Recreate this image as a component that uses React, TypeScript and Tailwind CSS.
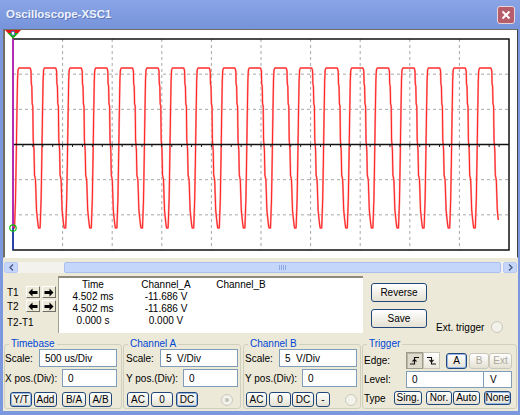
import clsx from 'clsx'
import type { ReactNode } from 'react'

const font = { fontFamily: '"Liberation Sans", Arial, sans-serif' }

// plot geometry, in window pixels
const PX0 = 13
const PX1 = 509
const PY0 = 39
const PY1 = 250
const DIV_X = (PX1 - PX0) / 10
const DIV_Y = (PY1 - PY0) / 6

const wavePoints = (() => {
  const pts: string[] = []
  const period = 25.6
  for (let k = 0; k < 20; k++) {
    const t = PX0 + period * k
    const seg: [number, number][] = [
      [t, 228],
      [t + 1.5, 228],
      [t + 2.5, 200],
      [t + 3.2, 160],
      [t + 3.8, 120],
      [t + 4.5, 80],
      [t + 5, 70],
      [t + 5.8, 68],
      [t + 17.2, 68],
      [t + 18, 71],
      [t + 18.3, 84],
      [t + 18.8, 86],
      [t + 19.2, 104],
      [t + 19.8, 106],
      [t + 20.2, 140],
      [t + 21, 150],
      [t + 21.5, 175],
      [t + 22.5, 180],
      [t + 23.5, 210],
      [t + 24.5, 220],
      [t + 25.2, 226],
    ]
    for (const [x, y] of seg) if (x <= 498.5) pts.push(`${x.toFixed(1)},${y}`)
  }
  return pts.join(' ')
})()

function Screen() {
  const vLines = Array.from({ length: 9 }, (_, i) => PX0 + DIV_X * (i + 1))
  const hLines = [1, 2, 4, 5].map((j) => PY0 + DIV_Y * j)
  const ticks = Array.from({ length: 49 }, (_, i) => PX0 + (DIV_X / 5) * (i + 1))
  const midY = PY0 + DIV_Y * 3
  return (
    <svg width="512" height="227" viewBox="5 30 512 227" className="block">
      <rect x="5" y="30" width="512" height="227" fill="#fff" />
      {vLines.map((x) => (
        <line key={x} x1={x} y1={PY0} x2={x} y2={PY1} stroke="#a8a8a8" strokeDasharray="3 3" />
      ))}
      {hLines.map((y) => (
        <line key={y} x1={PX0} y1={y} x2={PX1} y2={y} stroke="#a8a8a8" strokeDasharray="3 3" />
      ))}
      <polyline points={wavePoints} fill="none" stroke="#ffa0a0" strokeWidth="1.9" strokeLinejoin="round" />
      <polyline points={wavePoints} fill="none" stroke="#ff1414" strokeWidth="0.9" strokeLinejoin="round" />
      <line x1={PX0} y1={midY} x2={PX1} y2={midY} stroke="#111" strokeWidth="1.5" />
      {ticks.map((x) => (
        <line key={x} x1={x} y1={midY} x2={x} y2={midY + 2.5} stroke="#222" />
      ))}
      <rect x={PX0} y={PY0} width={PX1 - PX0} height={PY1 - PY0} fill="none" stroke="#111" strokeWidth="1.5" />
      {/* cursors */}
      <line x1={PX0} y1={PY0} x2={PX0} y2={228} stroke="#e020e0" strokeWidth="1.4" />
      <line x1={PX0} y1={228} x2={PX0} y2={PY1} stroke="#2040d0" strokeWidth="1.4" />
      <circle cx={PX0} cy="228" r="3.2" fill="none" stroke="#10c010" strokeWidth="1.2" />
      <polygon points="5,30 21,30 13,38.5" fill="#e01818" />
      <polygon points="7.5,33 18.5,33 13,38.5" fill="#18b818" />
      <rect x="11.5" y="31.5" width="3" height="3.5" fill="#fff" stroke="#2a4fd0" strokeWidth="0.6" />
    </svg>
  )
}

function XpButton({
  children,
  className,
  focus,
  disabled,
}: {
  children: ReactNode
  className?: string
  focus?: boolean
  disabled?: boolean
}) {
  return (
    <button
      className={clsx(
        'flex shrink-0 items-center justify-center rounded-[3px] border bg-linear-to-b from-white to-[#e4e1d3] text-[10px] leading-none',
        disabled ? 'border-[#c9c7ba] text-[#aca899]' : 'border-[#21477a] text-black',
        focus && 'shadow-[inset_0_0_0_1px_#97b8e6]',
        className,
      )}
    >
      {children}
    </button>
  )
}

function Field({ value, className }: { value: string; className: string }) {
  return (
    <div
      className={clsx(
        'flex h-full shrink-0 items-center border border-[#7f9db9] bg-white pl-[5px] text-[10px] whitespace-pre',
        className,
      )}
    >
      {value}
    </div>
  )
}

function Radio({ dot }: { dot?: boolean }) {
  return (
    <div className="flex h-[12px] w-[12px] shrink-0 items-center justify-center rounded-full border border-[#cac8bb] bg-[#f2f1ea]">
      {dot && <div className="h-[4px] w-[4px] rounded-full bg-[#c4c2b6]" />}
    </div>
  )
}

function Arrow({ dir }: { dir: 'left' | 'right' }) {
  return (
    <div className="flex h-[12px] w-[14px] items-center justify-center border border-t-white border-l-white border-r-[#716f64] border-b-[#716f64] bg-[#ece9d8]">
      <svg width="10" height="9" viewBox="0 0 10 9">
        <path
          d={dir === 'left' ? 'M0.5 4.5 L4.5 0.5 V3 H9.5 V6 H4.5 V8.5 Z' : 'M9.5 4.5 L5.5 0.5 V3 H0.5 V6 H5.5 V8.5 Z'}
          fill="#000"
        />
      </svg>
    </div>
  )
}

function ScrollArrow({ dir }: { dir: 'left' | 'right' }) {
  return (
    <div className="flex h-full w-[14px] shrink-0 items-center justify-center rounded-[2px] border border-[#b7c9f4] bg-[#c6d6f9]">
      <svg width="5" height="7" viewBox="0 0 5 7">
        <path d={dir === 'left' ? 'M4 0.5 L1 3.5 L4 6.5' : 'M1 0.5 L4 3.5 L1 6.5'} fill="none" stroke="#4a5f8f" strokeWidth="1.5" />
      </svg>
    </div>
  )
}

function Group({ title, className, children }: { title: string; className: string; children: ReactNode }) {
  return (
    <fieldset className={clsx('h-[71px] shrink-0 rounded-[3px] border border-[#d0d0bf]', className)}>
      <legend className="ml-[4px] px-[2px] text-[10px] leading-[12px] text-[#0046d5]">{title}</legend>
      <div className="-mt-[1px]">{children}</div>
    </fieldset>
  )
}

function EdgeIcon({ falling }: { falling?: boolean }) {
  return (
    <svg width="11" height="11" viewBox="0 0 11 11">
      <path d={falling ? 'M1 2.5 H5.5 V9 H10' : 'M1 9 H5.5 V2.5 H10'} fill="none" stroke="#111" strokeWidth="1.1" />
      <path d={falling ? 'M3.5 5 L5.5 7 L7.5 5' : 'M3.5 6.5 L5.5 4.5 L7.5 6.5'} fill="none" stroke="#111" strokeWidth="1.1" />
    </svg>
  )
}

export default function App() {
  return (
    <div className="flex h-[415px] w-[520px] flex-col bg-[#7b98de] text-black" style={font}>
      {/* title bar */}
      <div className="flex h-[29px] items-center justify-between bg-linear-to-b from-[#8aa5e6] to-[#7693db] pr-[5px] pl-[6px]">
        <div className="text-[11.5px] font-bold text-[#eef2fd] [text-shadow:1px_1px_0_#5d77b8]">Oscilloscope-XSC1</div>
        <div className="flex h-[18px] w-[18px] items-center justify-center rounded-[3px] border border-[#e9d4d8] bg-[#b65d6b]">
          <svg width="10" height="10" viewBox="0 0 10 10">
            <path d="M1.5 1.5 L8.5 8.5 M8.5 1.5 L1.5 8.5" stroke="#fff" strokeWidth="2" />
          </svg>
        </div>
      </div>

      <div className="mr-[2px] ml-[3px] flex h-[382px] flex-col bg-[#ece9d8]">
        {/* screen */}
        <div className="h-[229px] border-t border-r border-b border-l-2 border-t-[#716f64] border-r-[#404040] border-b-white border-l-[#716f64]">
          <Screen />
        </div>

        {/* scrollbar */}
        <div className="mt-[4px] mr-[1px] ml-[1px] flex h-[11px] bg-[#f3f2ec]">
          <ScrollArrow dir="left" />
          <div className="w-[46px]" />
          <div className="flex flex-1 items-center justify-center rounded-[2px] border border-[#a9bfee] bg-[#c5d6fb]">
            <div className="flex gap-[1px]">
              <div className="h-[5px] w-[1px] bg-[#8ea8e0]" />
              <div className="h-[5px] w-[1px] bg-[#8ea8e0]" />
              <div className="h-[5px] w-[1px] bg-[#8ea8e0]" />
              <div className="h-[5px] w-[1px] bg-[#8ea8e0]" />
            </div>
          </div>
          <div className="w-[2px]" />
          <ScrollArrow dir="right" />
        </div>

        {/* readout row */}
        <div className="mt-[3px] flex h-[57px] text-[10px]">
          <div className="w-[55px] shrink-0 pt-[10px] pl-[4px]">
            <div className="flex h-[12px] items-center">
              <div className="w-[19px]">T1</div>
              <Arrow dir="left" />
              <div className="w-[2px]" />
              <Arrow dir="right" />
            </div>
            <div className="mt-[2px] flex h-[12px] items-center">
              <div className="w-[19px]">T2</div>
              <Arrow dir="left" />
              <div className="w-[2px]" />
              <Arrow dir="right" />
            </div>
            <div className="mt-[5px] leading-[12px]">T2-T1</div>
          </div>

          <div className="grid h-[57px] w-[305px] shrink-0 grid-cols-[68px_78px_72px] content-start border-t-2 border-l border-t-[#8d8a7c] border-l-[#a19e90] bg-white pt-[1px] leading-[12px]">
            <div className="text-center">Time</div>
            <div className="text-center">Channel_A</div>
            <div className="text-center">Channel_B</div>
            <div className="text-center">4.502 ms</div>
            <div className="text-center">-11.686 V</div>
            <div />
            <div className="text-center">4.502 ms</div>
            <div className="text-center">-11.686 V</div>
            <div />
            <div className="text-center">0.000 s</div>
            <div className="text-center">0.000 V</div>
            <div />
          </div>

          <div className="flex flex-1">
            <div className="ml-[8px] flex flex-col gap-[7px] pt-[7px]">
              <XpButton className="h-[19px] w-[56px] text-[10.5px]">Reverse</XpButton>
              <XpButton className="h-[19px] w-[56px] text-[10.5px]">Save</XpButton>
            </div>
            <div className="mt-[45px] ml-[9px] flex h-[12px] items-center">
              <span>Ext. trigger</span>
              <div className="w-[7px]" />
              <Radio />
            </div>
          </div>
        </div>

        {/* control groups */}
        <div className="mt-[5px] ml-[1px] flex text-[10px]">
          <Group title="Timebase" className="w-[118px]">
            <div className="flex h-[18px] items-center">
              <div className="w-[34px] shrink-0">Scale:</div>
              <Field value="500 us/Div" className="w-[78px]" />
            </div>
            <div className="mt-[2px] flex h-[18px] items-center">
              <div className="w-[57px] shrink-0">X pos.(Div):</div>
              <Field value="0" className="w-[55px]" />
            </div>
            <div className="mt-[5px] flex h-[15px] pl-[5px]">
              <XpButton focus className="w-[22px]">Y/T</XpButton>
              <XpButton className="ml-[2px] w-[23px]">Add</XpButton>
              <XpButton className="ml-[5px] w-[24px]">B/A</XpButton>
              <XpButton className="ml-[3px] w-[23px]">A/B</XpButton>
            </div>
          </Group>

          <Group title="Channel A" className="ml-[1px] w-[118px]">
            <div className="flex h-[18px] items-center">
              <div className="w-[36px] shrink-0 pl-[2px]">Scale:</div>
              <Field value="5  V/Div" className="w-[78px]" />
            </div>
            <div className="mt-[2px] flex h-[18px] items-center">
              <div className="w-[59px] shrink-0 pl-[2px]">Y pos.(Div):</div>
              <Field value="0" className="w-[55px]" />
            </div>
            <div className="mt-[5px] flex h-[15px] items-center pl-[3px]">
              <XpButton className="h-full w-[22px]">AC</XpButton>
              <XpButton className="ml-[2px] h-full w-[22px]">0</XpButton>
              <XpButton focus className="ml-[3px] h-full w-[22px]">DC</XpButton>
              <div className="ml-[23px]">
                <Radio dot />
              </div>
            </div>
          </Group>

          <Group title="Channel B" className="ml-[2px] w-[118px]">
            <div className="flex h-[18px] items-center">
              <div className="w-[35px] shrink-0 pl-[1px]">Scale:</div>
              <Field value="5  V/Div" className="w-[78px]" />
            </div>
            <div className="mt-[2px] flex h-[18px] items-center">
              <div className="w-[58px] shrink-0 pl-[1px]">Y pos.(Div):</div>
              <Field value="0" className="w-[55px]" />
            </div>
            <div className="mt-[5px] flex h-[15px] items-center pl-[2px]">
              <XpButton className="h-full w-[21px]">AC</XpButton>
              <XpButton className="ml-[2px] h-full w-[22px]">0</XpButton>
              <XpButton className="ml-[1px] h-full w-[22px]">DC</XpButton>
              <XpButton className="ml-[2px] h-full w-[14px]">-</XpButton>
              <div className="ml-[15px]">
                <Radio />
              </div>
            </div>
          </Group>

          <Group title="Trigger" className="ml-[1px] w-[155px]">
            <div className="mt-[3px] flex h-[17px] items-center">
              <div className="w-[43px] shrink-0 pl-[1px]">Edge:</div>
              <div className="flex h-full w-[17px] items-center justify-center border border-[#9d9a8c] bg-[#dedbcd] shadow-[inset_1px_1px_0_#b9b6a8]">
                <EdgeIcon />
              </div>
              <div className="flex h-full w-[17px] items-center justify-center border border-[#c9c6b8] bg-linear-to-b from-white to-[#ebe8dc]">
                <EdgeIcon falling />
              </div>
              <XpButton focus className="ml-[6px] h-[16px] w-[21px]">A</XpButton>
              <XpButton disabled className="ml-[2px] h-[16px] w-[20px]">B</XpButton>
              <XpButton disabled className="h-[16px] w-[23px]">Ext</XpButton>
            </div>
            <div className="mt-[2px] flex h-[17px] items-center">
              <div className="w-[43px] shrink-0 pl-[1px]">Level:</div>
              <Field value="0" className="w-[78px]" />
              <Field value="V" className="w-[28px] border-l-0 pl-[6px]" />
            </div>
            <div className="mt-[3px] flex h-[14px] items-center">
              <div className="w-[31px] shrink-0 pl-[1px]">Type</div>
              <XpButton className="h-full w-[28px]">Sing.</XpButton>
              <XpButton className="ml-[4px] h-full w-[26px]">Nor.</XpButton>
              <XpButton className="ml-[1px] h-full w-[27px]">Auto</XpButton>
              <XpButton focus className="ml-[4px] h-full w-[27px]">None</XpButton>
            </div>
          </Group>
        </div>
      </div>
    </div>
  )
}
